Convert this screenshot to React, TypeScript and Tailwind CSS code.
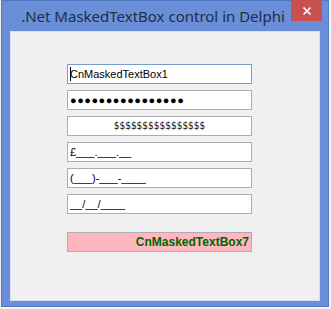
import { X } from 'lucide-react';

const boxBase =
  'h-[20px] w-[185px] border px-[2px] flex items-center text-[11px] leading-none';

export default function App() {
  return (
    <div className="w-[331px] h-[309px] bg-[#f4f4f4] relative">
      <div className="absolute left-[1px] top-0 w-[328px] h-[307px] bg-[#6a8fd8] border border-[#5277c4] flex flex-col">
        {/* title bar */}
        <div className="h-[30px] relative flex items-center">
          <div
            className="w-full pr-[24px] text-center text-[15px] text-[#1e2e45]"
            style={{ fontFamily: '"Segoe UI", "Noto Sans", sans-serif' }}
          >
            .Net MaskedTextBox control in Delphi
          </div>
          <div className="absolute right-[6px] top-[-1px] w-[31px] h-[21px] bg-[#c75050] flex items-center justify-center">
            <X className="w-[12px] h-[12px] text-white" strokeWidth={3.5} />
          </div>
        </div>
        {/* client area */}
        <div
          className="mx-[8px] h-[270px] bg-[#f0f0f0] border border-[#d6e0f3] pt-[32px] pl-[56px]"
          style={{ fontFamily: '"Liberation Sans", Arial, sans-serif' }}
        >
          <div className="flex flex-col gap-[6px] text-black">
            <div className={`${boxBase} bg-white border-[#7a9ccc]`}>
              <span className="relative">
                <span className="absolute left-0 top-[-2px] w-px h-[14px] bg-black" />
                CnMaskedTextBox1
              </span>
            </div>
            <div className={`${boxBase} bg-white border-[#abadb3] text-[9px] tracking-[0.5px]`}>
              ●●●●●●●●●●●●●●●●
            </div>
            <div
              className={`${boxBase} bg-white border-[#abadb3] justify-center antialiased text-[#111]`}
              style={{ fontFamily: '"DejaVu Sans Condensed", "DejaVu Sans", sans-serif' }}
            >
              <span className="text-[10px]">$$$$$$$$$$$$$$$$</span>
            </div>
            <div className={`${boxBase} bg-white border-[#abadb3]`}>£___.___.__</div>
            <div className={`${boxBase} bg-white border-[#abadb3]`}>(___)-___-____</div>
            <div className={`${boxBase} bg-white border-[#abadb3]`}>__/__/____</div>
          </div>
          <div
            className={`${boxBase} mt-[18px] border-[#abadb3] bg-[#ffb6c1] justify-end font-bold text-[#006400] text-[12px]`}
          >
            CnMaskedTextBox7
          </div>
        </div>
      </div>
    </div>
  );
}
